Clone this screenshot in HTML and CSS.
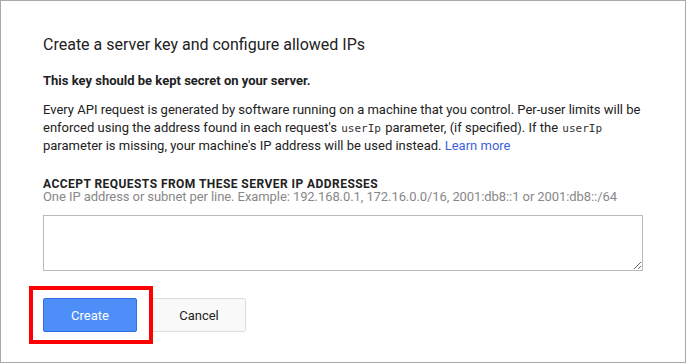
FILE: index.html
```html
<!DOCTYPE html>
<html lang="en">
<head>
  <meta charset="UTF-8">
  <title>Create a server key</title>
  <meta name="viewport" content="width=device-width, initial-scale=1.0">
  <link rel="stylesheet" href="styles.css">
</head>
<body>
  <div class="dialog">
    <h2 class="dialog-title">Create a server key and configure allowed IPs</h2>
    <p class="warning">This key should be kept secret on your server.</p>
    <p class="description">
      Every API request is generated by software running on a machine that you control. Per-user limits will be
      enforced using the address found in each request's <code>userIp</code> parameter, (if specified). If the <code>userIp</code>
      parameter is missing, your machine's IP address will be used instead. <a href="#" class="learn-more">Learn more</a>
    </p>
    <div class="field">
      <label class="field-label" for="ips">Accept requests from these server IP addresses</label>
      <span class="field-hint">One IP address or subnet per line. Example: 192.168.0.1, 172.16.0.0/16, 2001:db8::1 or 2001:db8::/64</span>
      <textarea id="ips" class="field-input"></textarea>
    </div>
    <div class="actions">
      <button class="btn btn-primary">Create</button>
      <button class="btn btn-default">Cancel</button>
      <!-- highlight box drawn over the Create button -->
      <span class="highlight"></span>
    </div>
  </div>
</body>
</html>
```

FILE: styles.css
```css
html, body {
  margin: 0;
  padding: 0;
  background: #fff;
}
body {
  font-family: Roboto, 'Liberation Sans', Arial, sans-serif;
  color: #222;
}
.dialog {
  box-sizing: border-box;
  width: 686px;
  height: 363px;
  border: 1px solid #a9a9a9;
  padding: 32px 42px 0 42px;
  display: flex;
  flex-direction: column;
}
.dialog-title {
  margin: 0;
  font-size: 16px;
  line-height: 24px;
  font-weight: 400;
  color: #222;
}
.warning {
  margin: 15px 0 0 0;
  font-size: 13px;
  line-height: 18px;
  font-weight: 700;
}
.description {
  margin: 11px 0 0 0;
  font-size: 13px;
  line-height: 18px;
}
.description code {
  font-family: 'DejaVu Sans Mono', 'Liberation Mono', monospace;
  font-size: 11px;
  line-height: 1;
  margin: 0 1px;
  color: #333;
}
.learn-more {
  color: #3e63dd;
  text-decoration: none;
}
.field {
  margin-top: 23px;
  display: flex;
  flex-direction: column;
}
.field-label {
  font-size: 12px;
  line-height: 12px;
  font-weight: 700;
  letter-spacing: 0.45px;
  text-transform: uppercase;
  color: #222;
}
.field-hint {
  font-size: 13px;
  line-height: 14px;
  letter-spacing: -0.08px;
  color: #888;
}
.field-input {
  box-sizing: border-box;
  margin-top: 11px;
  width: 600px;
  height: 56px;
  border: 1px solid #bbb;
  border-radius: 0;
  padding: 4px;
  font-family: Roboto, sans-serif;
  font-size: 13px;
  resize: vertical;
}
.actions {
  position: relative;
  margin-top: 27px;
  display: flex;
  align-items: center;
}
.btn {
  box-sizing: border-box;
  width: 94px;
  height: 34px;
  border-radius: 2px;
  font-family: Roboto, sans-serif;
  font-size: 13px;
  cursor: pointer;
}
.btn-primary {
  background: #4d8ef8;
  border: 1px solid #2f6fe3;
  color: #fff;
}
.btn-default {
  margin-left: 15px;
  background: #f9f9f9;
  border: 1px solid #dcdcdc;
  color: #222;
}
.highlight {
  position: absolute;
  left: -14px;
  top: -12px;
  width: 124px;
  height: 58px;
  box-sizing: border-box;
  border: 4px solid #f00;
  pointer-events: none;
}
```
